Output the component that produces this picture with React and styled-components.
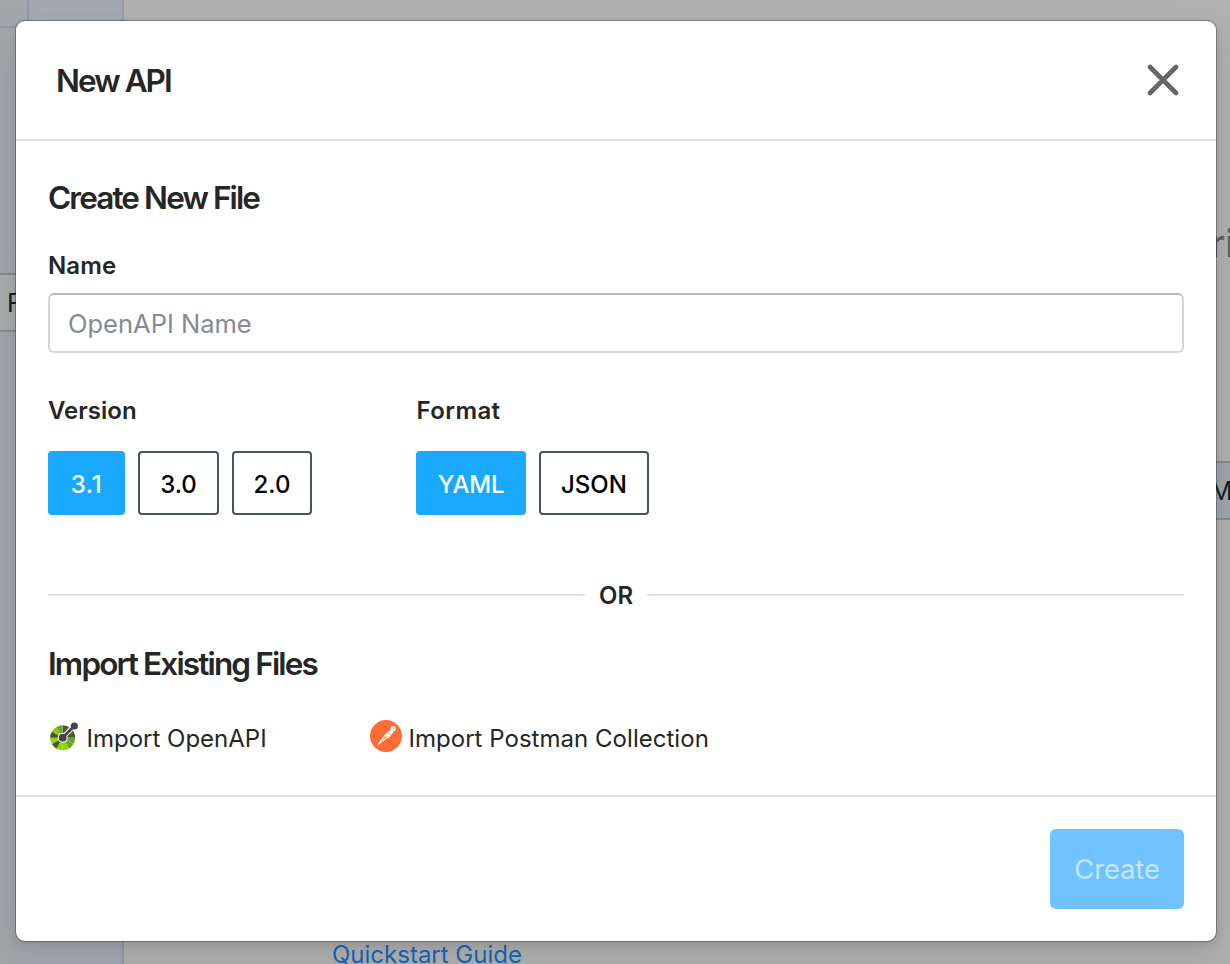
import React from "react";
import styled, { createGlobalStyle } from "styled-components";

const Global = createGlobalStyle`
  * { box-sizing: border-box; }
  body { margin: 0; overflow: hidden; font-family: Inter, "Liberation Sans", sans-serif; }
  button, input { font-family: inherit; margin: 0; }
`;

const Page = styled.div`
  position: relative;
  display: flex;
  width: 1230px;
  height: 964px;
  overflow: hidden;
  background: #b2b2b2;
`;

const Sidebar = styled.aside`
  width: 124px;
  flex: none;
  background: linear-gradient(90deg, #a6a7aa, #a5a9b3 40px);
  border-right: 2px solid #949aab;
  display: flex;
  flex-direction: column;
`;

const SidebarTabs = styled.div`
  height: 28px;
  display: flex;
  flex: none;
`;

const TabCell = styled.div`
  width: 29px;
  border-right: 2px solid #949aab;
  border-bottom: 2px solid #949aab;
`;

const BackButton = styled.div`
  height: 59px;
  flex: none;
  margin-top: ${(p) => p.$top}px;
  padding-left: ${(p) => p.$pad}px;
  border: solid #8a8b8d;
  border-width: 2px 0;
  background: ${(p) => p.$bg};
  color: #161e26;
  font-size: 25px;
  line-height: 57px;
  white-space: nowrap;
`;

const Main = styled.main`
  flex: 1;
  min-width: 0;
  display: flex;
  justify-content: space-between;
`;

const GuideLink = styled.a`
  align-self: flex-end;
  margin-left: 208px;
  height: 24px;
  line-height: 30px;
  font-size: 24px;
  color: #1467bb;
  white-space: nowrap;
`;

const RightEdge = styled.div`
  width: 24px;
  display: flex;
  flex-direction: column;
`;

const PageHeading = styled.div`
  margin-top: 219px;
  height: 48px;
  line-height: 48px;
  font-size: 38px;
  font-weight: 500;
  color: #606060;
  padding-left: 4px;
`;

const Modal = styled.section`
  position: absolute;
  left: 16px;
  top: 21px;
  width: 1200px;
  height: 920px;
  display: flex;
  flex-direction: column;
  background: #fff;
  color: #262626;
  border-radius: 9px;
  box-shadow: 0 0 0 1px rgba(16, 22, 26, 0.3), 0 4px 8px rgba(16, 22, 26, 0.12),
    0 18px 46px 6px rgba(16, 22, 26, 0.1);
`;

const Header = styled.header`
  height: 120px;
  flex: none;
  display: flex;
  align-items: center;
  justify-content: space-between;
  padding: 0 37px 0 40px;
  border-bottom: 2px solid #d9dfeb;
`;

const Title = styled.h2`
  margin: ${(p) => p.$margin || "0"};
  padding-top: ${(p) => p.$drop || 0}px;
  height: 40px;
  font-size: 31.5px;
  line-height: 40px;
  font-weight: 600;
  letter-spacing: ${(p) => p.$track}px;
  white-space: nowrap;
`;

const CloseButton = styled.button`
  display: flex;
  padding: 0;
  border: 0;
  background: none;
`;

const Body = styled.div`
  flex: 1;
  padding: 37px 32px 0;
`;

const Label = styled.label`
  display: block;
  height: 30px;
  line-height: 30px;
  padding-left: ${(p) => p.$indent || 0}px;
  font-size: 24px;
  font-weight: 600;
  letter-spacing: ${(p) => p.$track}px;
`;

const NameInput = styled.input`
  display: block;
  width: 100%;
  height: 60px;
  margin: 12px 0 43px;
  padding: 1px 18px 0;
  border: 2px solid #d5d6d7;
  border-top-color: #b9babb;
  border-radius: 6px;
  font-size: 25.5px;
  outline: 0;
  &::placeholder { color: #848b92; opacity: 1; }
`;

const Options = styled.div`
  display: flex;
`;

const OptionGroup = styled.div`
  width: 368px;
`;

const Choices = styled.div`
  display: flex;
  gap: 13px;
  margin-top: 25px;
`;

const Choice = styled.button`
  width: ${(p) => p.$w}px;
  height: 64px;
  padding: 2px 0 0;
  border: 2px solid ${(p) => (p.$on ? "#1aa9ff" : "#465369")};
  border-radius: 4px;
  background: ${(p) => (p.$on ? "#1aa9ff" : "#fff")};
  color: ${(p) => (p.$on ? "#fff" : "#000")};
  font-size: 24px;
  font-weight: 500;
  letter-spacing: ${(p) => p.$track}px;
`;

const Divider = styled.div`
  display: flex;
  align-items: center;
  gap: 14px;
  height: 30px;
  margin-top: 65px;
  font-size: 24px;
  font-weight: 600;
  &::before, &::after {
    content: "";
    flex: 1;
    height: 2px;
    background: #d9dfeb;
  }
`;

const DividerText = styled.span`
  width: 34px;
  line-height: 30px;
  padding-top: 2px;
`;

const Imports = styled.div`
  display: flex;
  margin-top: 33px;
`;

const ImportItem = styled.div`
  display: flex;
  align-items: center;
  width: ${(p) => p.$w}px;
  height: 40px;
  gap: 6.5px;
  font-size: 24px;
  letter-spacing: ${(p) => p.$track}px;
  white-space: nowrap;
  svg { flex: none; }
  span { padding-top: 5px; }
`;

const Footer = styled.footer`
  height: 146px;
  flex: none;
  display: flex;
  justify-content: flex-end;
  padding: 32px;
  border-top: 2px solid #d9dfeb;
`;

const CreateButton = styled.button`
  width: 134px;
  height: 80px;
  padding: 0 0 1px;
  border: 0;
  border-radius: 6px;
  background: #70c3ff;
  color: #c5e6ff;
  font-size: 27.5px;
  letter-spacing: -0.15px;
`;

const wedgeColors = ["#4d5a2b", "#4d5a2b", "#4d5a2b", "#6ba52f", "#6ba52f", "#93d500", "#93d500", "#4d5a2b", "#93d500", "#4d5a2b", "#85cc00", "#6ba52f"];

const wedge = (i) => {
  const a = ((i * 30 - 90) * Math.PI) / 180;
  const b = (((i + 1) * 30 - 90) * Math.PI) / 180;
  const at = (r, t) => `${(14.7 + r * Math.cos(t)).toFixed(2)} ${(19.8 + r * Math.sin(t)).toFixed(2)}`;
  return `M${at(4, a)}L${at(12.5, a)}A12.5 12.5 0 0 1 ${at(12.5, b)}L${at(4, b)}Z`;
};

const OpenApiIcon = () => (
  <svg width="32" height="36" viewBox="0 0 32 36">
    {wedgeColors.map((c, i) => (
      <path key={i} d={wedge(i)} fill={c} />
    ))}
    <circle cx="14.7" cy="19.7" r="5" fill="#fff" />
    <path d="M14.7 19.4 26.3 7.9" stroke="#fff" strokeWidth="4.8" />
    <path d="M14.7 19.4 26.3 7.9" stroke="#44444b" strokeWidth="2.8" />
    <circle cx="14.7" cy="19.7" r="3.9" fill="#44444b" />
    <circle cx="26.3" cy="8" r="3.6" fill="#44444b" />
  </svg>
);

const PostmanIcon = () => (
  <svg width="32" height="32" viewBox="0 0 32 32">
    <circle cx="16" cy="16" r="16" fill="#ff6c37" />
    <circle cx="23.2" cy="8.7" r="2.6" fill="#fff" />
    <path d="M20.4 10 14 15.2l-1.9 3.6-3.2 3.5-1.8 3.4 4.7-3.4 3.7-2.8 3.8-2 4.1-5.6Z" fill="#fff" />
    <path d="m13.5 16.2 3.6 2.3M11 21.8l5.8-5.4M18.3 13.2l2.6 1.6" stroke="#ff6c37" strokeWidth=".7" fill="none" />
    <path d="m22.5 9.6 2-1.8" stroke="#ff6c37" strokeWidth=".7" />
  </svg>
);

export default function App() {
  return (
    <Page>
      <Global />
      <Sidebar>
        <SidebarTabs><TabCell /></SidebarTabs>
        <BackButton $top={245} $pad={7} $bg="#acadae">F</BackButton>
      </Sidebar>
      <Main>
        <GuideLink>Quickstart Guide</GuideLink>
        <RightEdge>
          <PageHeading>ri</PageHeading>
          <BackButton $top={194} $pad={4} $bg="#a3a7ad">M</BackButton>
        </RightEdge>
      </Main>
      <Modal>
        <Header>
          <Title $track={-1.95} $drop={1}>New API</Title>
          <CloseButton aria-label="Close">
            <svg width="32" height="32" viewBox="0 0 32 32">
              <path d="M3 3l26 26M29 3l-26 26" stroke="#666" strokeWidth="4.6" strokeLinecap="round" />
            </svg>
          </CloseButton>
        </Header>
        <Body>
          <Title $track={-1.9} $margin="0 0 33px">Create New File</Title>
          <Label $track={0.1}>Name</Label>
          <NameInput placeholder="OpenAPI Name" />
          <Options>
            <OptionGroup>
              <Label $track={0}>Version</Label>
              <Choices>
                <Choice $on $w={77} $track={0.7}>3.1</Choice>
                <Choice $w={81} $track={0}>3.0</Choice>
                <Choice $w={80} $track={0}>2.0</Choice>
              </Choices>
            </OptionGroup>
            <OptionGroup>
              <Label $track={0.4} $indent={0.5}>Format</Label>
              <Choices>
                <Choice $on $w={110} $track={-0.2}>YAML</Choice>
                <Choice $w={110} $track={0}>JSON</Choice>
              </Choices>
            </OptionGroup>
          </Options>
          <Divider><DividerText>OR</DividerText></Divider>
          <Title $track={-1.85} $drop={1} $margin="33px 0 0">Import Existing Files</Title>
          <Imports>
            <ImportItem $w={322} $track={0}><OpenApiIcon /><span>Import OpenAPI</span></ImportItem>
            <ImportItem $w={400} $track={0.03}><PostmanIcon /><span>Import Postman Collection</span></ImportItem>
          </Imports>
        </Body>
        <Footer><CreateButton disabled>Create</CreateButton></Footer>
      </Modal>
    </Page>
  );
}
